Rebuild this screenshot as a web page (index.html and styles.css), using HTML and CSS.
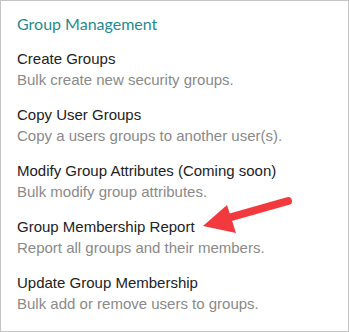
FILE: index.html
```html
<!DOCTYPE html>
<html>
<head>
<meta charset="utf-8">
<link rel="stylesheet" href="styles.css">
</head>
<body>
<div class="panel">
  <h2 class="title">Group Management</h2>
  <ul class="list">
    <li class="item"><div class="name">Create Groups</div><div class="desc">Bulk create new security groups.</div></li>
    <li class="item"><div class="name">Copy User Groups</div><div class="desc">Copy a users groups to another user(s).</div></li>
    <li class="item"><div class="name">Modify Group Attributes (Coming soon)</div><div class="desc">Bulk modify group attributes.</div></li>
    <li class="item"><div class="name">Group Membership Report</div><div class="desc">Report all groups and their members.</div></li>
    <li class="item"><div class="name">Update Group Membership</div><div class="desc">Bulk add or remove users to groups.</div></li>
  </ul>
  <svg class="arrow" width="110" height="50" viewBox="0 0 110 50">
    <path d="M97 10 L30 29" stroke="#f23a3e" stroke-width="8" stroke-linecap="round" fill="none"/>
    <polygon points="12,35 36,14 45,42" fill="#f23a3e"/>
  </svg>
</div>
</body>
</html>
```
FILE: styles.css
```css
html, body {
  margin: 0;
  padding: 0;
  background: #fff;
}
.panel {
  position: relative;
  box-sizing: border-box;
  width: 349px;
  height: 332px;
  border: 1px solid #c4c4c4;
  padding: 12px 0 0 16px;
}
.title {
  margin: 0;
  font-family: Lato, sans-serif;
  font-weight: 400;
  font-size: 16px;
  line-height: 22px;
  color: #1f8b8f;
}
.list {
  list-style: none;
  margin: 13px 0 0;
  padding: 0;
}
.item {
  margin-bottom: 13px;
  font-family: "Liberation Sans", Arial, sans-serif;
  font-size: 15px;
}
.name {
  line-height: 21px;
  color: #222;
}
.desc {
  line-height: 22px;
  color: #8a8a8a;
}
.arrow {
  position: absolute;
  left: 190px;
  top: 190px;
}
```
